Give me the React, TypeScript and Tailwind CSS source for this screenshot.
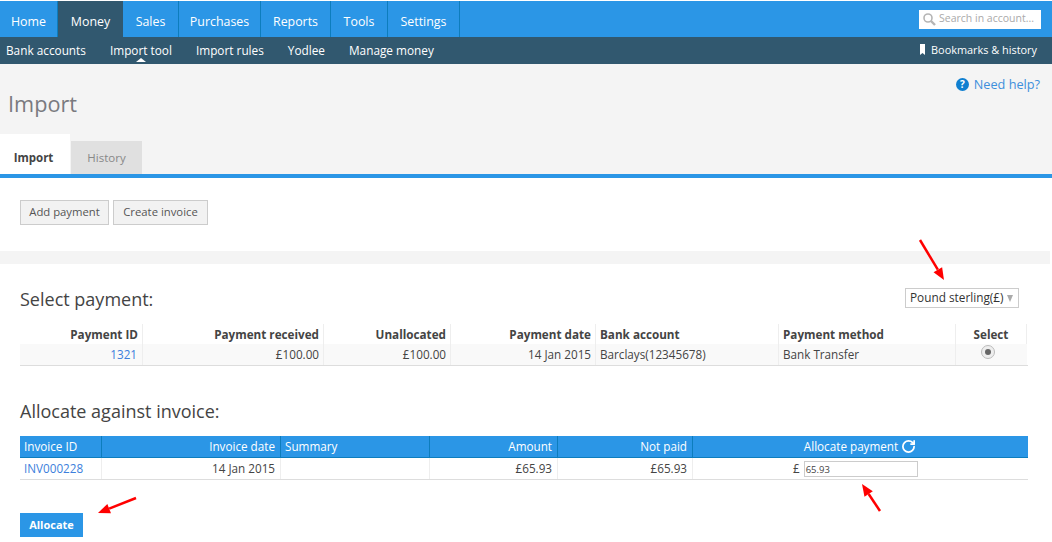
import { RotateCw } from 'lucide-react';

const topNav = [
    { label: 'Home', w: 'w-[58px]' },
    { label: 'Money', w: 'w-[65px]', active: true },
    { label: 'Sales', w: 'w-[56px]' },
    { label: 'Purchases', w: 'w-[82px]' },
    { label: 'Reports', w: 'w-[70px]' },
    { label: 'Tools', w: 'w-[57px]' },
    { label: 'Settings', w: 'w-[72px]' },
];

const subNav = ['Bank accounts', 'Import tool', 'Import rules', 'Yodlee', 'Manage money'];

const Arrow = ({ x1, y1, x2, y2 }: { x1: number; y1: number; x2: number; y2: number }) => {
    const a = Math.atan2(y2 - y1, x2 - x1);
    const back = 12;
    const bx = x2 - back * Math.cos(a);
    const by = y2 - back * Math.sin(a);
    const nx = -Math.sin(a) * 5;
    const ny = Math.cos(a) * 5;
    return (
        <svg className="absolute top-0 left-0 pointer-events-none" width="1052" height="542">
            <line x1={x1} y1={y1} x2={bx} y2={by} stroke="#ff0000" strokeWidth="2.5" />
            <polygon points={`${x2},${y2} ${bx + nx},${by + ny} ${bx - nx},${by - ny}`} fill="#ff0000" />
        </svg>
    );
};

export default function App() {
    return (
        <div className="relative h-[542px] w-[1052px] overflow-hidden bg-white font-['Open_Sans',sans-serif] text-[11.7px] text-[#444]">
            {/* top nav */}
            <div className="mt-px flex h-9 items-center justify-between bg-[#2b96e6]">
                <div className="flex h-full">
                    {topNav.map((item) => (
                        <div
                            key={item.label}
                            className={`flex h-full items-center justify-center pt-[6px] text-[12.4px] text-white ${item.w} ${item.active ? 'bg-[#31586f]' : 'border-r border-[#0d7dbd]'}`}
                        >
                            {item.label}
                        </div>
                    ))}
                </div>
                <div className="mr-[11px] flex h-[19px] w-[122px] items-center gap-[3px] bg-white pl-[3px] text-[10.5px] text-[#aaa]">
                    <svg width="14" height="14" viewBox="0 0 14 14" fill="none" stroke="#b5b5b5">
                        <circle cx="6" cy="6" r="4" strokeWidth="1.6" />
                        <line x1="9" y1="9" x2="13" y2="13" strokeWidth="2.4" />
                    </svg>
                    Search in account...
                </div>
            </div>

            {/* sub nav */}
            <div className="flex h-[27px] items-center justify-between bg-[#31586f] pl-[6px] pr-[15px] text-white">
                <div className="flex gap-6 text-[11.8px]">
                    {subNav.map((item) => (
                        <div key={item} className="relative">
                            {item}
                            {item === 'Import tool' && (
                                <div className="absolute left-1/2 top-[16px] h-0 w-0 -translate-x-1/2 border-x-[5px] border-b-[4px] border-x-transparent border-b-white" />
                            )}
                        </div>
                    ))}
                </div>
                <div className="mb-px flex items-center gap-[6px] text-[10.9px]">
                    <svg width="5" height="11" viewBox="0 0 5 11" fill="#fff">
                        <polygon points="0,0 5,0 5,11 2.5,9 0,11" />
                    </svg>
                    Bookmarks &amp; history
                </div>
            </div>

            {/* page head */}
            <div className="relative h-[110px] bg-[#f4f4f4]">
                <div className="pl-2 pt-[25px] text-[21.7px] leading-[30px] text-[#7a7a7f]">Import</div>
                <div className="absolute right-3 top-[11px] flex items-center gap-[5px] text-[12.7px] text-[#3d8fdc]">
                    <span className="flex h-[13px] w-[13px] items-center justify-center rounded-full bg-[#0f7fd0] text-[10px] font-bold text-white">?</span>
                    Need help?
                </div>
                <div className="absolute bottom-0 left-0 flex items-end gap-px">
                    <div className="flex h-10 w-[70px] items-center justify-center bg-white pr-[3px] pt-[8px] text-[11.5px] font-bold text-[#444]">Import</div>
                    <div className="flex h-[33px] w-[71px] items-center justify-center bg-[#e0e0e0] text-[11.5px] text-[#888]">History</div>
                </div>
            </div>
            <div className="h-1 bg-[#2b96e6]" />

            {/* actions */}
            <div className="flex h-[73px] items-start gap-1 pl-5 pt-[22px]">
                <button className="h-[25px] w-[89px] border border-[#ccc] bg-[#f2f2f2] text-[11.3px] text-[#555]">Add payment</button>
                <button className="h-[25px] w-[95px] border border-[#ccc] bg-[#f2f2f2] text-[11.3px] text-[#555]">Create invoice</button>
            </div>
            <div className="mr-[2px] h-[13px] bg-[#f4f4f4]" />

            {/* select payment */}
            <div className="px-5 pr-6">
                <div className="flex h-[47px] items-end justify-between">
                    <div className="text-[18px] leading-[24px] text-[#444]">Select payment:</div>
                    <div className="relative top-[-3px] mr-[9px] flex h-5 w-[114px] items-center justify-between border border-[#ccc] pl-1 pr-[5px] text-[11.8px] text-[#333]">
                        Pound sterling(£)
                        <span className="h-0 w-0 border-x-[3.5px] border-t-[7px] border-x-transparent border-t-[#aaa]" />
                    </div>
                </div>
                <div className="mt-[13px] grid grid-cols-[123px_181px_127px_145px_183px_177px_71px] border-b border-[#ddd]">
                    <div className="border-r border-[#eee] pr-[4px] text-right font-bold leading-[20px]">Payment ID</div>
                    <div className="border-r border-[#eee] pr-[4px] text-right font-bold leading-[20px]">Payment received</div>
                    <div className="border-r border-[#eee] pr-[4px] text-right font-bold leading-[20px]">Unallocated</div>
                    <div className="border-r border-[#eee] pr-[4px] text-right font-bold leading-[20px]">Payment date</div>
                    <div className="border-r border-[#eee] pl-[4px] font-bold leading-[20px]">Bank account</div>
                    <div className="border-r border-[#eee] pl-[4px] font-bold leading-[20px]">Payment method</div>
                    <div className="border-r border-[#eee] text-center font-bold leading-[20px]">Select</div>
                    <div className="border-r border-[#eee] bg-[#f9f9f9] pb-px pr-[5px] text-right leading-[20px] text-[#3d7fdc]">1321</div>
                    <div className="border-r border-[#eee] bg-[#f9f9f9] pb-px pr-[4px] text-right leading-[20px]">£100.00</div>
                    <div className="border-r border-[#eee] bg-[#f9f9f9] pb-px pr-[4px] text-right leading-[20px]">£100.00</div>
                    <div className="border-r border-[#eee] bg-[#f9f9f9] pb-px pr-[4px] text-right leading-[20px]">14 Jan 2015</div>
                    <div className="border-r border-[#eee] bg-[#f9f9f9] pb-px pl-[4px] leading-[20px]">Barclays(12345678)</div>
                    <div className="border-r border-[#eee] bg-[#f9f9f9] pb-px pl-[4px] leading-[20px]">Bank Transfer</div>
                    <div className="flex h-[21px] items-start justify-center bg-[#f9f9f9] pr-[8px] pt-[1px]">
                        <span className="flex h-[14px] w-[14px] items-center justify-center rounded-full border border-[#bbb] bg-[#eee]">
                            <span className="h-[6px] w-[6px] rounded-full bg-[#666]" />
                        </span>
                    </div>
                </div>

                {/* allocate */}
                <div className="mt-[33px] text-[18px] leading-[24px]">Allocate against invoice:</div>
                <div className="mt-[13px] grid grid-cols-[82px_179px_149px_128px_135px_335px] border-b border-[#ddd]">
                    <div className="h-[22px] border-b-[1px] border-r border-[#0d7dbd] bg-[#2b96e6] pl-[4px] leading-[21px] text-white">Invoice ID</div>
                    <div className="h-[22px] border-b-[1px] border-r border-[#0d7dbd] bg-[#2b96e6] pr-[5px] text-right leading-[21px] text-white">Invoice date</div>
                    <div className="h-[22px] border-b-[1px] border-r border-[#0d7dbd] bg-[#2b96e6] pl-[4px] leading-[21px] text-white">Summary</div>
                    <div className="h-[22px] border-b-[1px] border-r border-[#0d7dbd] bg-[#2b96e6] pr-[5px] text-right leading-[21px] text-white">Amount</div>
                    <div className="h-[22px] border-b-[1px] border-r border-[#0d7dbd] bg-[#2b96e6] pr-[5px] text-right leading-[21px] text-white">Not paid</div>
                    <div className="flex h-[22px] items-center justify-center gap-[3px] border-b-[1px] border-[#0d7dbd] bg-[#2b96e6] pr-[1px] text-white">
                        Allocate payment <RotateCw size={15} strokeWidth={2.8} />
                    </div>
                    <div className="border-r border-[#eee] pl-[4px] leading-[21px] text-[#3d7fdc]">INV000228</div>
                    <div className="border-r border-[#eee] pr-[5px] text-right leading-[21px]">14 Jan 2015</div>
                    <div className="border-r border-[#eee]" />
                    <div className="border-r border-[#eee] pr-[5px] text-right leading-[21px]">£65.93</div>
                    <div className="border-r border-[#eee] pr-[5px] text-right leading-[21px]">£65.93</div>
                    <div className="flex h-[21px] items-center gap-[4px] pl-[100px]">
                        £
                        <div className="h-4 w-[114px] border border-[#ccc] pl-[1px] text-[9.5px] leading-[15px]">65.93</div>
                    </div>
                </div>
                <button className="mt-[33px] h-6 w-[63px] bg-[#2b96e6] text-[11px] font-bold text-white">Allocate</button>
            </div>

            <Arrow x1={920} y1={240} x2={944} y2={280} />
            <Arrow x1={136} y1={498} x2={98} y2={513} />
            <Arrow x1={880} y1={511} x2={862} y2={484} />
        </div>
    );
}
